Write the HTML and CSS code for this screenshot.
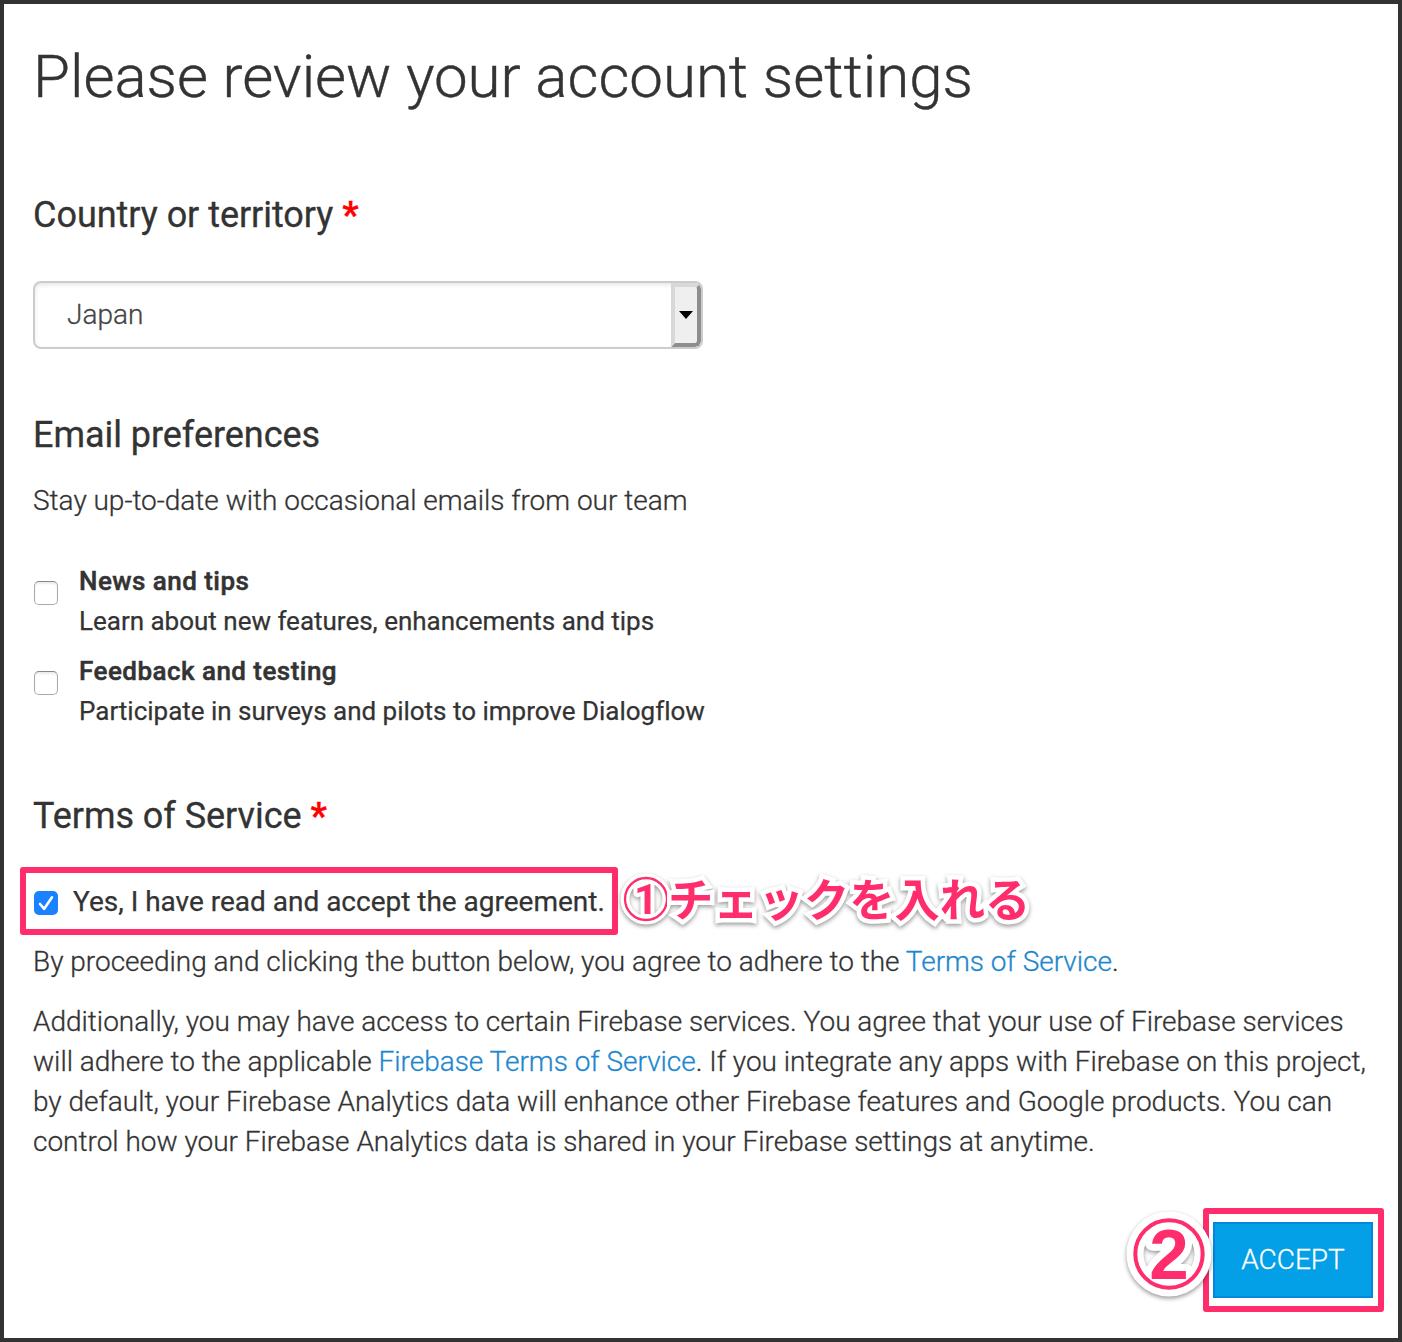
FILE: index.html
```html
<!DOCTYPE html>
<html lang="en">
<head>
<meta charset="utf-8">
<title>Please review your account settings</title>
<link rel="stylesheet" href="styles.css">
</head>
<body>
<main class="page">
  <h1 class="title">Please review your account settings</h1>

  <h2 class="heading heading-country">Country or territory <span class="required">*</span></h2>
  <div class="select">
    <span class="select-value">Japan</span>
    <span class="select-button"><svg width="14" height="8" viewBox="0 0 14 8"><path d="M0 0H14L7 8Z"/></svg></span>
  </div>

  <h2 class="heading heading-email">Email preferences</h2>
  <p class="text intro">Stay up-to-date with occasional emails from our team</p>
  <ul class="options">
    <li class="option">
      <span class="checkbox"></span>
      <div><div class="option-name">News and tips</div><div class="option-info">Learn about new features, enhancements and tips</div></div>
    </li>
    <li class="option">
      <span class="checkbox"></span>
      <div><div class="option-name">Feedback and testing</div><div class="option-info">Participate in surveys and pilots to improve Dialogflow</div></div>
    </li>
  </ul>

  <h2 class="heading heading-terms">Terms of Service <span class="required">*</span></h2>
  <div class="agree-row">
    <div class="highlight agree">
      <span class="checkbox checked"><svg width="24" height="24" viewBox="0 0 24 24"><path d="M6 13L10.2 17.8L18 6.3"/></svg></span>
      <span class="agree-label">Yes, I have read and accept the agreement.</span>
    </div>
    <div class="note note-check" lang="ja">
      <svg class="number" width="52" height="52" viewBox="0 0 52 52">
        <circle class="halo" cx="26" cy="26" r="21" stroke-width="9"/>
        <text class="digit digit-one" x="26" y="41" text-anchor="middle">1</text>
        <circle class="ring" cx="26" cy="26" r="21" stroke-width="2.3"/>
      </svg>
      <span class="note-text">チェックを入れる</span>
    </div>
  </div>
  <p class="text">By proceeding and clicking the button below, you agree to adhere to the <a class="link">Terms of Service</a>.</p>
  <p class="text extra">Additionally, you may have access to certain Firebase services. You agree that your use of Firebase services<br>will adhere to the applicable <a class="link">Firebase Terms of Service</a>. If you integrate any apps with Firebase on this project,<br>by default, your Firebase Analytics data will enhance other Firebase features and Google products. You can<br>control how your Firebase Analytics data is shared in your Firebase settings at anytime.</p>

  <div class="actions">
    <div class="highlight accept-frame">
      <button class="accept">ACCEPT</button>
      <div class="note note-accept">
        <svg class="number" width="88" height="88" viewBox="0 0 88 88">
          <circle class="halo" cx="44" cy="44" r="34" stroke-width="17"/>
          <text class="digit digit-two" x="44" y="68.5" text-anchor="middle">2</text>
          <circle class="ring" cx="44" cy="44" r="33.7" stroke-width="4"/>
        </svg>
      </div>
    </div>
  </div>
</main>
</body>
</html>
```
FILE: styles.css
```css
* { box-sizing: border-box; }
body { margin: 0; background: #fff; color: #333; font-family: Roboto, sans-serif; }
h1, h2, p, ul { margin: 0; padding: 0; }
.page { width: 1402px; height: 1342px; border: 4px solid #333; padding: 40px 11px 0 29px; overflow: hidden; }
.title { font-size: 60px; line-height: 66px; font-weight: 300; white-space: nowrap; letter-spacing: -.02px; -webkit-text-stroke: .4px; }
.heading { font-size: 36px; line-height: 40px; font-weight: 400; white-space: nowrap; letter-spacing: -.04px; -webkit-text-stroke: .3px; }
.required { color: #f00; font-weight: 700; }
.heading-country { margin-top: 85px; }
.heading-email { margin-top: 66px; }
.heading-terms { margin-top: 55px; }

.select { display: flex; justify-content: space-between; width: 670px; height: 68px; margin-top: 46px; border: 2px solid #ccc; border-radius: 8px; overflow: hidden; box-shadow: inset 0 2px 4px rgba(0, 0, 0, .1); }
.select-value { padding-left: 32px; font-size: 28px; line-height: 64px; font-weight: 300; color: #444; -webkit-text-stroke: .3px; }
.select-button { display: flex; align-items: center; justify-content: center; width: 30px; border: 4px solid; border-color: #d8d8d8 #8e8e8e #8e8e8e #d8d8d8; border-radius: 0 6px 6px 0; background: #efefef; }
.select-button svg { fill: #000; }

.text { font-size: 28px; line-height: 40px; font-weight: 300; white-space: nowrap; letter-spacing: -.012px; -webkit-text-stroke: .3px; }
.intro { margin-top: 26px; }
.options { list-style: none; margin-top: 40px; }
.option { display: flex; gap: 21px; height: 90px; padding-left: 1px; font-size: 26px; line-height: 40px; white-space: nowrap; letter-spacing: -.01px; }
.option-name { font-weight: 500; letter-spacing: .46px; -webkit-text-stroke: .5px; }
.option-info { -webkit-text-stroke: .25px; }
.checkbox { flex: none; width: 24px; height: 24px; margin-top: 20px; border: 1px solid #aaa; border-top-color: #888; border-radius: 5px; background: #fff; box-shadow: inset 0 2px 2px rgba(0, 0, 0, .08); }
.checked { margin: 0; border: 0; background: #1a82ff; box-shadow: none; }
.checked svg { display: block; fill: none; stroke: #fff; stroke-width: 2.6; stroke-linecap: round; stroke-linejoin: round; }

.highlight { border: 6px solid #ff2d6c; border-radius: 3px; }
.agree-row { display: flex; align-items: center; margin: 31px 0 7px -13px; height: 68px; }
.agree { display: flex; align-items: center; gap: 15px; width: 598px; height: 68px; padding: 3px 0 0 8px; }
.agree-label { font-size: 28px; line-height: 40px; padding-bottom: 2px; white-space: nowrap; -webkit-text-stroke: .25px; letter-spacing: -.01px; }
.note { display: flex; color: #ff2d6c; filter: drop-shadow(0 2px 2px rgba(0, 0, 0, .4)); }
.note-check { align-items: center; height: 68px; margin: -5px 0 0 2px; }
.note-text { margin: -4px 0 0 -4px; font: 700 45.3px/68px "Noto Sans CJK JP", sans-serif; white-space: nowrap; -webkit-text-stroke: 9px #fff; paint-order: stroke fill; }
.number { display: block; overflow: visible; }
.halo { fill: none; stroke: #fff; }
.ring { fill: none; stroke: #ff2d6c; }
.digit { fill: #ff2d6c; stroke: #fff; stroke-linejoin: round; paint-order: stroke fill; font-weight: 700; }
.digit-one { font-family: Roboto, sans-serif; font-size: 42px; stroke-width: 8px; }
.digit-two { font-family: "Liberation Sans", sans-serif; font-size: 71px; stroke-width: 14px; }
.link { color: #1c87ce; }
.extra { margin-top: 20px; }

.actions { display: flex; justify-content: flex-end; margin-top: 46px; padding-right: 3px; }
.accept-frame { position: relative; width: 181px; height: 104px; padding: 8px 4px 0 4px; }
.accept { display: block; width: 160px; height: 76px; border: 2px solid #0088e0; background: #03a0e8; color: #fff; font: 300 28px/72px Roboto, sans-serif; padding: 0; -webkit-text-stroke: .3px; }
.note-accept { position: absolute; left: -84px; top: -4px; }
```
